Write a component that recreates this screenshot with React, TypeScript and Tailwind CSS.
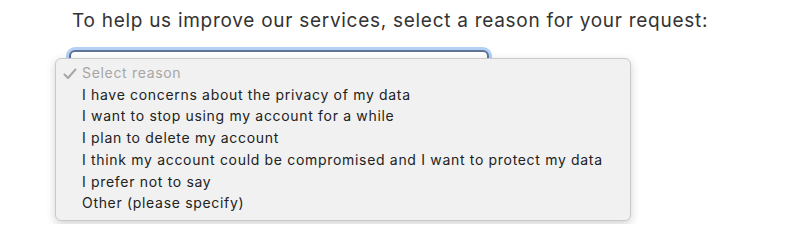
import React from "react";

const items = [
  "I have concerns about the privacy of my data",
  "I want to stop using my account for a while",
  "I plan to delete my account",
  "I think my account could be compromised and I want to protect my data",
  "I prefer not to say",
  "Other (please specify)",
];

export default function App() {
  return (
    <div
      className="relative w-[800px] h-[224px] bg-white overflow-hidden"
      style={{ fontFamily: 'Inter, "Liberation Sans", Arial, sans-serif' }}
    >
      <div className="pl-[72px] pt-[9px] text-[19px] leading-[24px] tracking-[0.72px] text-[#333333]">
        To help us improve our services, select a reason for your request:
      </div>
      <div className="ml-[69px] mt-[17px] w-[420px] h-[40px] rounded-[6px] border-2 border-[#5f7396] bg-white shadow-[0_0_0_3px_#b3d1f5]" />
      <div className="absolute left-[55px] top-[58px] w-[576px] rounded-[6px] border border-[#c9c9c9] bg-[#f1f1f1] pt-[3px] pb-[6px] shadow-[0_3px_10px_rgba(0,0,0,0.18)] text-[14px] leading-[21.7px] tracking-[0.68px] text-[#222222]">
        <div className="flex items-center text-[#a6a6a6]">
          <span className="w-[26px] pl-[7px]">
            <svg width="14" height="12" viewBox="0 0 14 12" className="mt-[2px]">
              <path d="M1.5 6.5 L5 10 L12.5 1.5" fill="none" stroke="#a6a6a6" strokeWidth="2" strokeLinecap="round" strokeLinejoin="round" />
            </svg>
          </span>
          <span>Select reason</span>
        </div>
        {items.map((t) => (
          <div key={t} className="flex items-center">
            <span className="w-[26px]" />
            <span>{t}</span>
          </div>
        ))}
      </div>
    </div>
  );
}
